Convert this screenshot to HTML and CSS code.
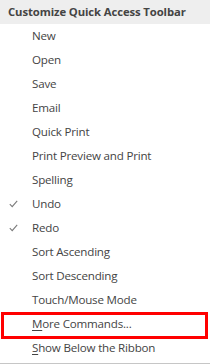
FILE: index.html
```html
<!DOCTYPE html>
<html>
<head>
<meta charset="utf-8">
<link rel="stylesheet" href="styles.css">
</head>
<body>
<div class="menu">
  <div class="header">Customize Quick Access Toolbar</div>
  <ul class="items">
    <li class="item"><span class="check"></span><span class="label">New</span></li>
    <li class="item"><span class="check"></span><span class="label">Open</span></li>
    <li class="item"><span class="check"></span><span class="label">Save</span></li>
    <li class="item"><span class="check"></span><span class="label">Email</span></li>
    <li class="item"><span class="check"></span><span class="label">Quick Print</span></li>
    <li class="item"><span class="check"></span><span class="label">Print Preview and Print</span></li>
    <li class="item"><span class="check"></span><span class="label">Spelling</span></li>
    <li class="item"><span class="check"><svg width="9" height="8" viewBox="0 0 9 8"><polyline points="0.8,4.2 3.2,6.6 8.2,0.8" fill="none" stroke="#7a7a7a" stroke-width="1.1"/></svg></span><span class="label">Undo</span></li>
    <li class="item"><span class="check"><svg width="9" height="8" viewBox="0 0 9 8"><polyline points="0.8,4.2 3.2,6.6 8.2,0.8" fill="none" stroke="#7a7a7a" stroke-width="1.1"/></svg></span><span class="label">Redo</span></li>
    <li class="item"><span class="check"></span><span class="label">Sort Ascending</span></li>
    <li class="item"><span class="check"></span><span class="label">Sort Descending</span></li>
    <li class="item"><span class="check"></span><span class="label">Touch/Mouse Mode</span></li>
    <li class="item"><span class="check"></span><span class="label"><u>M</u>ore Commands...</span></li>
    <li class="item"><span class="check"></span><span class="label"><u>S</u>how Below the Ribbon</span></li>
  </ul>
  <div class="highlight"></div>
</div>
</body>
</html>
```
FILE: styles.css
```css
html, body {
  margin: 0;
  padding: 0;
  background: #ffffff;
}
.menu {
  position: relative;
  width: 210px;
  height: 363px;
  border-bottom: 1px solid #c6c6c6;
  font-family: "Open Sans", "Noto Sans", sans-serif;
  color: #444444;
}
.header {
  height: 24px;
  line-height: 23px;
  background: #eeeeee;
  padding-left: 8px;
  font-size: 11.3px;
  font-weight: bold;
  letter-spacing: -0.1px;
  color: #444444;
}
.items {
  list-style: none;
  margin: 0;
  padding: 0;
}
.item {
  display: flex;
  align-items: center;
  height: 24px;
  padding-bottom: 1px;
  box-sizing: border-box;
  font-size: 11.6px;
  letter-spacing: -0.2px;
}
.check {
  width: 32px;
  display: flex;
  justify-content: flex-start;
  padding-left: 9px;
  box-sizing: border-box;
}
.check svg {
  display: block;
}
.label u {
  text-decoration-thickness: 1px;
  text-underline-offset: 2px;
}
.highlight {
  position: absolute;
  left: 1px;
  top: 312px;
  width: 207px;
  height: 27px;
  box-sizing: border-box;
  border: 3px solid #ff0000;
}
```
